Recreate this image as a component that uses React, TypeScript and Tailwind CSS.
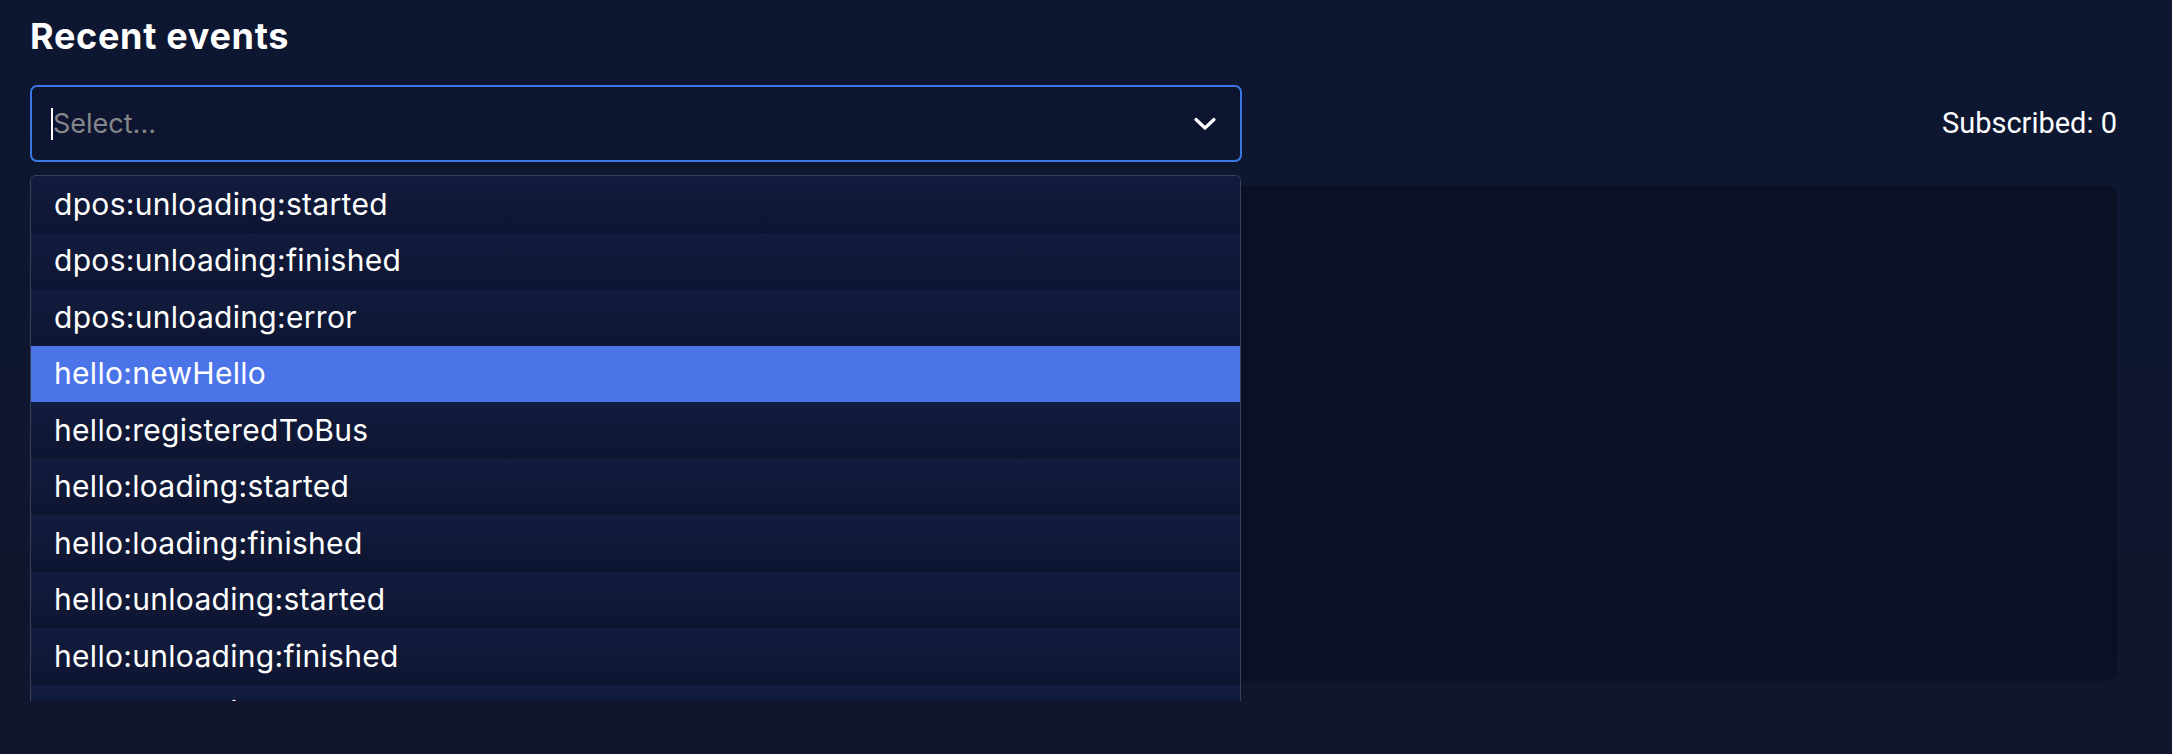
import React from "react";

const EVENTS: string[] = [
  "dpos:unloading:started",
  "dpos:unloading:finished",
  "dpos:unloading:error",
  "hello:newHello",
  "hello:registeredToBus",
  "hello:loading:started",
  "hello:loading:finished",
  "hello:unloading:started",
  "hello:unloading:finished",
  "hello:unloading:error",
];

const ACTIVE = "hello:newHello";

function Chevron() {
  return (
    <svg width="24" height="14" viewBox="0 0 24 14" fill="none" className="shrink-0">
      <path d="M3 2.5 L12 11 L21 2.5" stroke="white" strokeWidth="3.2" strokeLinecap="round" strokeLinejoin="round" />
    </svg>
  );
}

export default function App() {
  return (
    <div className="min-h-screen w-full bg-gradient-to-b from-[#0d1731] to-[#11152d] pl-[30px] pr-[55px] pt-[14px] font-['Inter',sans-serif]">
      <h2 className="text-[36px] font-bold leading-[44px] tracking-[0.7px] text-white">Recent events</h2>

      {/* select + counter */}
      <div className="mt-[27px] flex items-center justify-between">
        <div className="relative">
          <div className="flex h-[77px] w-[1212px] items-center justify-between rounded-[7px] border-2 border-[#3a78e6] bg-[#0d1530] pl-[19px] pr-[23px]">
            <div className="flex items-center">
              <span className="h-[32px] w-[2px] bg-white" />
              <span className="text-[27px] leading-none text-[#85868a]">Select...</span>
            </div>
            <Chevron />
          </div>

          {/* open menu */}
          <div className="absolute left-0 top-[90px] z-10 h-[526px] w-[1211px] overflow-hidden rounded-t-[6px] border border-b-0 border-[#394157] bg-[#0e1632]">
            {EVENTS.map((ev) => (
              <div
                key={ev}
                className={
                  ev === ACTIVE
                    ? "flex h-[56.5px] items-center bg-[#4a74e8] pl-[23px] text-[30px] tracking-[0.3px] text-white"
                    : "flex h-[56.5px] items-center bg-gradient-to-b from-[#121c3e] to-[#0e1531] pl-[23px] text-[30px] tracking-[0.3px] text-white"
                }
              >
                {ev}
              </div>
            ))}
          </div>
        </div>

        <span className="font-['Roboto',sans-serif] text-[29px] text-white">Subscribed: 0</span>
      </div>

      {/* events log */}
      <div className="mt-[24px] h-[495px] rounded-[10px] bg-[#0b1124]" />
    </div>
  );
}
